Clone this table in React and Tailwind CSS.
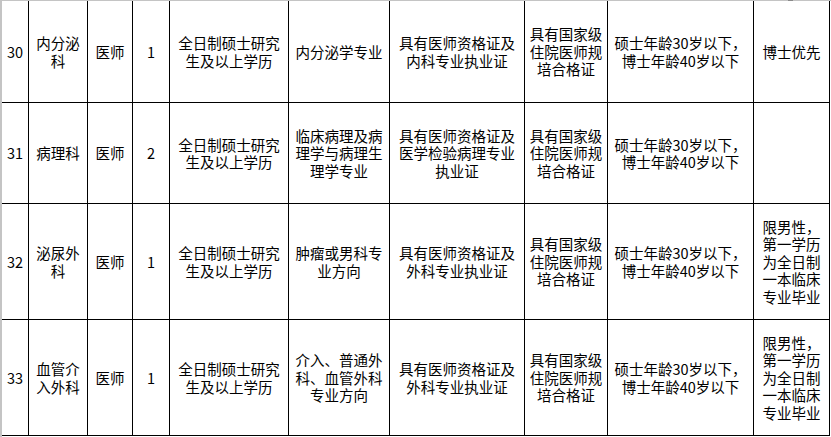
import React from "react";

const rows = [
  {
    no: "30",
    dept: ["内分泌", "科"],
    post: "医师",
    num: "1",
    edu: ["全日制硕士研究", "生及以上学历"],
    major: ["内分泌学专业"],
    cert: ["具有医师资格证及", "内科专业执业证"],
    train: ["具有国家级", "住院医师规", "培合格证"],
    age: ["硕士年龄30岁以下，", "博士年龄40岁以下"],
    note: ["博士优先"],
  },
  {
    no: "31",
    dept: ["病理科"],
    post: "医师",
    num: "2",
    edu: ["全日制硕士研究", "生及以上学历"],
    major: ["临床病理及病", "理学与病理生", "理学专业"],
    cert: ["具有医师资格证及", "医学检验病理专业", "执业证"],
    train: ["具有国家级", "住院医师规", "培合格证"],
    age: ["硕士年龄30岁以下，", "博士年龄40岁以下"],
    note: [],
  },
  {
    no: "32",
    dept: ["泌尿外", "科"],
    post: "医师",
    num: "1",
    edu: ["全日制硕士研究", "生及以上学历"],
    major: ["肿瘤或男科专", "业方向"],
    cert: ["具有医师资格证及", "外科专业执业证"],
    train: ["具有国家级", "住院医师规", "培合格证"],
    age: ["硕士年龄30岁以下，", "博士年龄40岁以下"],
    note: ["限男性，", "第一学历", "为全日制", "一本临床", "专业毕业"],
  },
  {
    no: "33",
    dept: ["血管介", "入外科"],
    post: "医师",
    num: "1",
    edu: ["全日制硕士研究", "生及以上学历"],
    major: ["介入、普通外", "科、血管外科", "专业方向"],
    cert: ["具有医师资格证及", "外科专业执业证"],
    train: ["具有国家级", "住院医师规", "培合格证"],
    age: ["硕士年龄30岁以下，", "博士年龄40岁以下"],
    note: ["限男性，", "第一学历", "为全日制", "一本临床", "专业毕业"],
  },
];

// 每格：居中，右边和下边黑线，换行照原表
const Cell = ({ lines }) => (
  <div className="flex items-center justify-center border-r border-b border-black text-center whitespace-nowrap">
    {lines.length > 0 && (
      <p>
        {lines.map((l, i) => (
          <React.Fragment key={i}>
            {i > 0 && <br />}
            {l}
          </React.Fragment>
        ))}
      </p>
    )}
  </div>
);

const App = () => {
  return (
    <div
      className="w-[831px] h-[437px] bg-white overflow-hidden text-black text-[14.5px] leading-[17.5px]"
      style={{ fontFamily: '"Noto Sans CJK SC", "Liberation Sans", sans-serif' }}
    >
      {/* 顶部灰色网格线 */}
      <div className="flex h-px bg-[#c4c4c4]">
        <div className="ml-[788px] w-[5px] h-px bg-[#8a8a8a]" />
      </div>
      <div className="flex">
        <div className="w-[2px] h-[436px] bg-[#c4c4c4]" />
        <div className="grid grid-cols-[27px_59px_45px_37px_119px_101px_135px_83px_146px_76px] grid-rows-[102px_101px_116px_116px]">
          {rows.map((r) => (
            <React.Fragment key={r.no}>
              <Cell lines={[r.no]} />
              <Cell lines={r.dept} />
              <Cell lines={[r.post]} />
              <Cell lines={[r.num]} />
              <Cell lines={r.edu} />
              <Cell lines={r.major} />
              <Cell lines={r.cert} />
              <Cell lines={r.train} />
              <Cell lines={r.age} />
              <Cell lines={r.note} />
            </React.Fragment>
          ))}
        </div>
      </div>
    </div>
  );
};

export default App;
